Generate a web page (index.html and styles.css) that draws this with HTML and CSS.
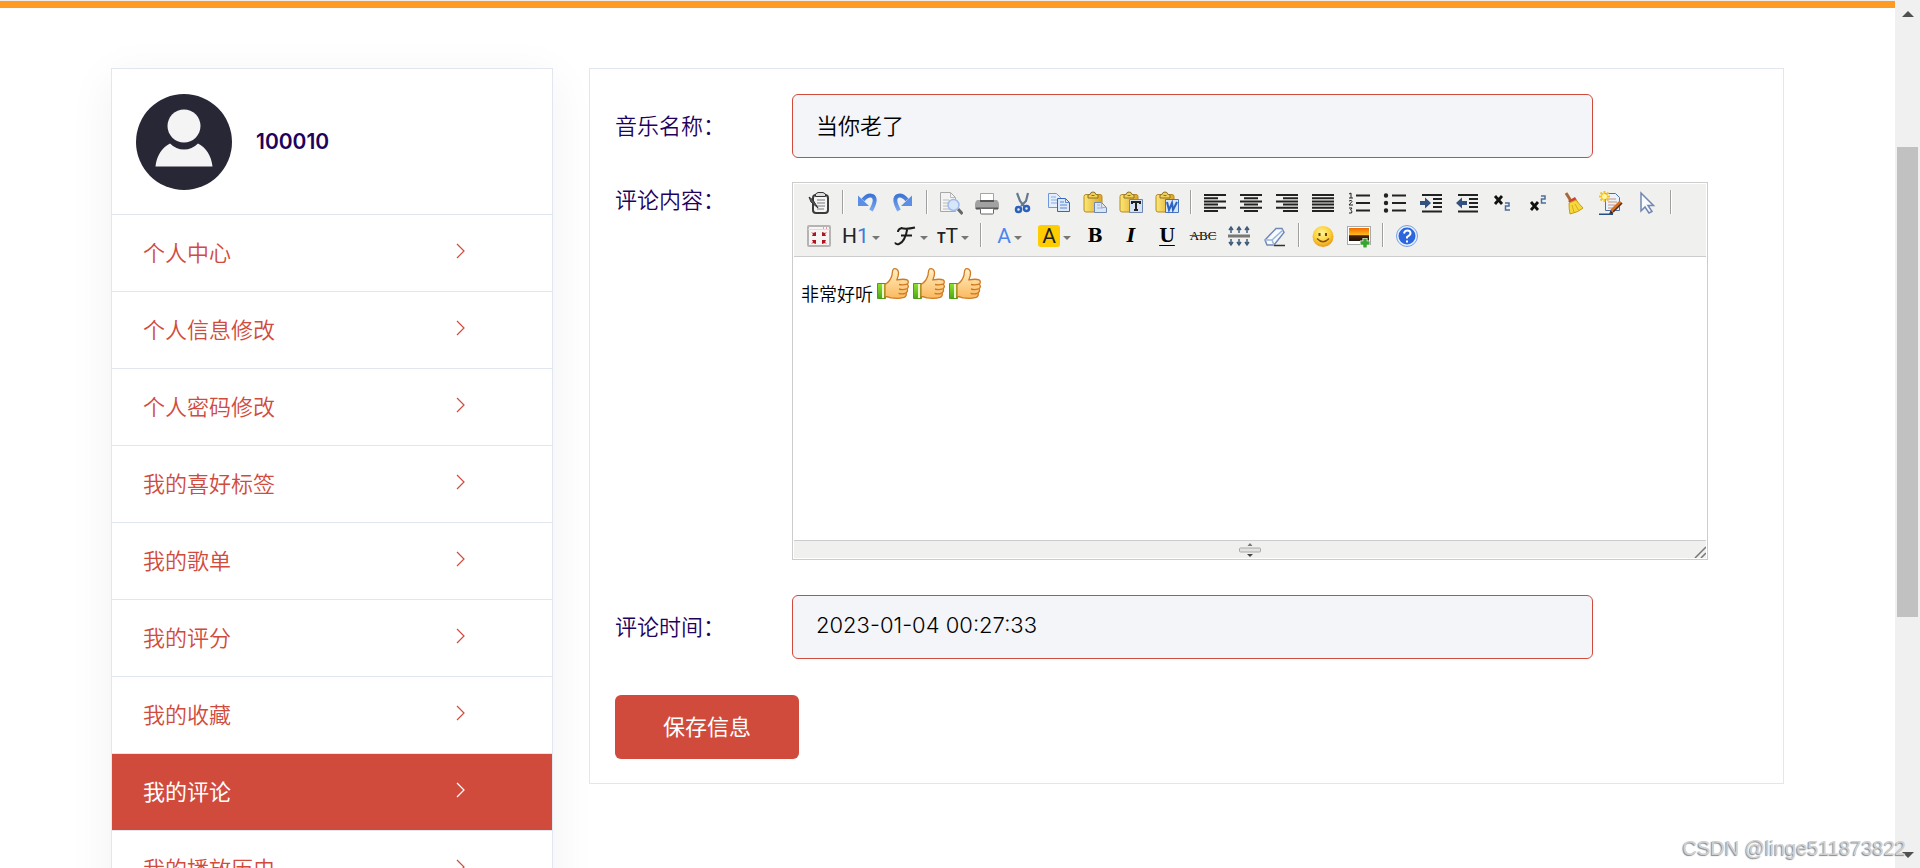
FILE: index.html
```html
<!DOCTYPE html>
<html lang="zh-CN">
<head>
<meta charset="utf-8">
<title>我的评论</title>
<link rel="stylesheet" href="styles.css">
</head>
<body>
<svg class="defs" aria-hidden="true">
  <defs>
    <linearGradient id="skin" x1="0" y1="0" x2="0" y2="1"><stop offset="0" stop-color="#fff0c4"/><stop offset="1" stop-color="#fbb95f"/></linearGradient>
    <linearGradient id="cuff" x1="0" y1="0" x2="0" y2="1"><stop offset="0" stop-color="#8fe02c"/><stop offset="1" stop-color="#4da818"/></linearGradient>
    <linearGradient id="blue" x1="0" y1="0" x2="0" y2="1"><stop offset="0" stop-color="#3d76d6"/><stop offset="1" stop-color="#7ba7ee"/></linearGradient>
    <linearGradient id="board" x1="0" y1="0" x2="1" y2="0"><stop offset="0" stop-color="#fbe777"/><stop offset="1" stop-color="#dba620"/></linearGradient>
    <radialGradient id="face" cx=".45" cy=".35" r=".65"><stop offset="0" stop-color="#fff59b"/><stop offset=".6" stop-color="#fcd038"/><stop offset="1" stop-color="#eb9a16"/></radialGradient>
    <linearGradient id="sunset" x1="0" y1="0" x2="0" y2="1"><stop offset="0" stop-color="#f06a00"/><stop offset=".5" stop-color="#ffb81c"/><stop offset=".6" stop-color="#4b2406"/><stop offset="1" stop-color="#1c1208"/></linearGradient>
  </defs>
  <symbol id="chevron" viewBox="0 0 10 16"><path d="M1 1l7 7-7 7" fill="none" stroke="currentColor" stroke-width="1.200"/></symbol>
  <symbol id="thumb" viewBox="-2 0 36 36">
    <path d="M2.500 18.500h8v15h-8z" fill="url(#cuff)" stroke="#4d9d1d"/>
    <path d="M8 19v14" stroke="#eaf9d0" stroke-width="2"/>
    <path d="M10 19.500c3.500-2 6-5.500 7-9.500.4-2 0-5 1.800-6.200 2-.9 4.500.8 4.700 3.700.2 3-1 5.600-1.600 7.300 3.100-.5 8-.9 10.200.1 1.600.9 1.500 3.200.2 4.300 1.500 1.300 1.300 3.600-.3 4.500 1 1.400.5 3.400-1 4.200.8 1.600 0 3.800-2 4.500-3 .9-9 1-12.500.5-2.200-.4-3.500-1.500-6.500-1.400z" fill="url(#skin)" stroke="#ce7a24" stroke-width="1.300"/>
    <path d="M24 19.500c2.500.6 5.500.5 8-.3M24 24c2.500.7 5.500.6 7.500-.2M23.500 28.300c2.200.6 5 .6 7 0" fill="none" stroke="#ce7a24" stroke-width="1.300"/>
  </symbol>
  <symbol id="clip" viewBox="0 0 24 24">
    <path d="M1 5.500q0-2 2-2h14q2 0 2 2V19q0 2-2 2H3q-2 0-2-2z" fill="url(#board)" stroke="#b98a22"/>
    <path d="M5 7V4q1-.5 2.200-.7Q7.500 1 10 1t2.800 2.300Q14 3.500 15 4v3z" fill="#efd15a" stroke="#8d6f2c"/>
    <path d="M8.500 4.500h3" stroke="#8d6f2c"/>
  </symbol>
</svg>

<div class="page">
  <div class="content">
    <div class="topbar"></div>
    <main class="layout">
      <nav class="sidebar">
        <div class="profile">
          <svg class="avatar" viewBox="0 0 96 96"><circle cx="48" cy="48" r="48" fill="#282736"/><circle cx="48" cy="32" r="16.500" fill="#f4f4f4"/><path d="M19.500 72.500C20.500 62 26 53.500 34 49.500q6 6 14 6t14-6c8 4 13.500 12.500 14.500 23z" fill="#f4f4f4"/></svg>
          <span class="username">100010</span>
        </div>
        <a class="item" href="#">个人中心<svg class="chevron"><use href="#chevron"/></svg></a>
        <a class="item" href="#">个人信息修改<svg class="chevron"><use href="#chevron"/></svg></a>
        <a class="item" href="#">个人密码修改<svg class="chevron"><use href="#chevron"/></svg></a>
        <a class="item" href="#">我的喜好标签<svg class="chevron"><use href="#chevron"/></svg></a>
        <a class="item" href="#">我的歌单<svg class="chevron"><use href="#chevron"/></svg></a>
        <a class="item" href="#">我的评分<svg class="chevron"><use href="#chevron"/></svg></a>
        <a class="item" href="#">我的收藏<svg class="chevron"><use href="#chevron"/></svg></a>
        <a class="item active" href="#">我的评论<svg class="chevron"><use href="#chevron"/></svg></a>
        <a class="item" href="#">我的播放历史<svg class="chevron"><use href="#chevron"/></svg></a>
      </nav>

      <form class="panel">
        <div class="row">
          <label class="label" for="name">音乐名称：</label>
          <input class="field" id="name" type="text" value="当你老了">
        </div>
        <div class="row row-editor">
          <label class="label" id="body-label">评论内容：</label>
          <div class="editor">
            <div class="toolbar">
              <button type="button" class="tool" aria-label="HTML代码"><svg viewBox="0 0 24 24"><rect x="6" y="4" width="15" height="18" rx="3" fill="#f4f4f4" stroke="#3b3b3b" stroke-width="2"/><path d="M8.500 5.500V3L11 1.500h5L18.500 3v2.500z" fill="#ddd" stroke="#333"/><path d="M10 9h8M10 12h8M10 15h8M10 18h7" stroke="#777b82"/><path d="M2 6l4 3 5 8-7-6z" fill="#555" stroke="#333"/></svg></button>
              <span class="sep"></span>
              <button type="button" class="tool" aria-label="后退"><svg viewBox="0 0 24 24"><path d="M8 9q5-6 9.500-4 5 3-1.500 14.500" fill="none" stroke="url(#blue)" stroke-width="4"/><path d="M3 4.500V15h11z" fill="#5b8fe6"/></svg></button>
              <button type="button" class="tool" aria-label="前进"><svg viewBox="0 0 24 24"><path d="M16 9q-5-6-9.500-4-5 3 1.500 14.500" fill="none" stroke="url(#blue)" stroke-width="4"/><path d="M21 4.500V15H10z" fill="#5b8fe6"/></svg></button>
              <span class="sep"></span>
              <button type="button" class="tool" aria-label="预览"><svg viewBox="0 0 24 24"><path d="M1.500 1.500h10l5 5v14h-15z" fill="#f3f3f3" stroke="#a8a8a8"/><path d="M11.500 1.500v5h5M4 9h6M4 12h5M4 15h5M4 18h7" fill="none" stroke="#bbb"/><path d="M19 18l4.500 5" stroke="#666" stroke-width="3"/><circle cx="14.500" cy="14" r="5.500" fill="#d5e5fa" stroke="#9fbbea" stroke-width="1.500"/></svg></button>
              <button type="button" class="tool" aria-label="打印"><svg viewBox="0 0 24 24"><path d="M5.500 11V2.500h13V11" fill="#fff" stroke="#a4a4a4"/><path d="M2 9h20q2 2 2 4v5H0v-5q0-2 2-4z" fill="#a2a2a2"/><path d="M1 17.500h22M5 10h14" stroke="#555" stroke-width="2"/><rect x="5.500" y="17.500" width="13" height="5.500" rx="1" fill="#fff" stroke="#666"/></svg></button>
              <button type="button" class="tool" aria-label="剪切"><svg viewBox="0 0 24 24"><path d="M6 2l3 8 4 5M17 2l-2 8-5 5" fill="none" stroke="#66798e" stroke-width="2.200"/><circle cx="7.500" cy="18.500" r="2.500" fill="none" stroke="#2c61bb" stroke-width="2.500"/><circle cx="15.500" cy="17.500" r="2.500" fill="none" stroke="#2c61bb" stroke-width="2.500"/></svg></button>
              <button type="button" class="tool" aria-label="复制"><svg viewBox="0 0 24 24"><path d="M1.500 2.500h8l4 4v10h-12z" fill="#e4eefc" stroke="#6f97db"/><path d="M4 6h5M4 9h6M4 12h6" stroke="#8cadde"/><path d="M10.500 7.500h8l4 4v9h-12z" fill="#dce9fb" stroke="#3467bf"/><path d="M18.500 7.500v4h4M13 11h4M13 14h7M13 17h7" fill="none" stroke="#5c88cf"/></svg></button>
              <button type="button" class="tool" aria-label="粘贴"><svg viewBox="0 0 24 24"><use href="#clip"/><path d="M11.500 11.500h7l5 5v5h-12z" fill="#dbe6f5" stroke="#6c87b1"/><path d="M18.500 11.500v5h5M14 14h3M14 17h6" fill="none" stroke="#9cb0ce"/></svg></button>
              <button type="button" class="tool" aria-label="粘贴为无格式文本"><svg viewBox="0 0 24 24"><use href="#clip"/><path d="M10.500 8.500h13v13h-13z" fill="#d7e2f2" stroke="#6c87b1"/><path d="M13 13v-2h8v2M17 11v8M15 19h4" fill="none" stroke="#222" stroke-width="2"/></svg></button>
              <button type="button" class="tool" aria-label="从Word粘贴"><svg viewBox="0 0 24 24"><use href="#clip"/><path d="M10.500 8.500h13v13h-13z" fill="#d9e6fb" stroke="#4874bd"/><path d="M12 11l2 8 3-7 1 7 4-8" fill="none" stroke="#2c63bd" stroke-width="2"/></svg></button>
              <span class="sep"></span>
              <button type="button" class="tool" aria-label="左对齐"><svg class="lines" viewBox="0 0 24 24"><path d="M1 4h22M1 7.200h14M1 10.400h22M1 13.600h14M1 16.800h22M1 20h14"/></svg></button>
              <button type="button" class="tool" aria-label="居中"><svg class="lines" viewBox="0 0 24 24"><path d="M1 4h22M5 7.200h14M1 10.400h22M5 13.600h14M1 16.800h22M5 20h14"/></svg></button>
              <button type="button" class="tool" aria-label="右对齐"><svg class="lines" viewBox="0 0 24 24"><path d="M1 4h22M8 7.200h15M1 10.400h22M8 13.600h15M1 16.800h22M8 20h15"/></svg></button>
              <button type="button" class="tool" aria-label="两端对齐"><svg class="lines" viewBox="0 0 24 24"><path d="M1 4h22M1 7.200h22M1 10.400h22M1 13.600h22M1 16.800h22M1 20h22"/></svg></button>
              <button type="button" class="tool" aria-label="编号"><svg class="lines" viewBox="0 0 24 24"><path d="M9 4.500h14M9 12h14M9 19.500h14"/><path class="thin" d="M2 3l2-1v5M2 7h4M2 10q3-1.500 3 .5L2 14h4M2 17h3l-1.500 2Q6 20 4.500 22L2 22"/></svg></button>
              <button type="button" class="tool" aria-label="项目符号"><svg class="lines" viewBox="0 0 24 24"><path d="M9 4.500h14M9 12h14M9 19.500h14"/><circle cx="3" cy="4.500" r="1.200"/><circle cx="3" cy="12" r="1.200"/><circle cx="3" cy="19.500" r="1.200"/></svg></button>
              <button type="button" class="tool" aria-label="增加缩进"><svg class="lines" viewBox="0 0 24 24"><path d="M3 4h20M14 8h9M14 12h9M14 16h9M3 20.500h20"/><polygon class="move" points="1,10 6,10 6,6.500 12,12 6,17.500 6,14 1,14"/></svg></button>
              <button type="button" class="tool" aria-label="减少缩进"><svg class="lines" viewBox="0 0 24 24"><path d="M3 4h20M14 8h9M14 12h9M14 16h9M3 20.500h20"/><polygon class="move" points="12,10 7,10 7,6.500 1,12 7,17.500 7,14 12,14"/></svg></button>
              <button type="button" class="tool" aria-label="下标"><svg viewBox="0 0 24 24"><path d="M4 5l7 8M11 5l-7 8" stroke="#111" stroke-width="2.800"/><path d="M14 12h4v3h-3.500v4H19" fill="none" stroke="#4c6ca0" stroke-width="1.500"/></svg></button>
              <button type="button" class="tool" aria-label="上标"><svg viewBox="0 0 24 24"><path d="M4 11l7 8M11 11l-7 8" stroke="#111" stroke-width="2.800"/><path d="M14 5h4v3h-3.500v4H19" fill="none" stroke="#4c6ca0" stroke-width="1.500"/></svg></button>
              <button type="button" class="tool" aria-label="清除格式"><svg viewBox="0 0 24 24"><path d="M3 2l5 8" stroke="#a66b35" stroke-width="3"/><path d="M5 10l7-4 3 5-6 3z" fill="#d23f37"/><path d="M6 12l7-3q4 5 7 8-4 4-13 6-1-5-1-11z" fill="#f7d83a" stroke="#c99a1b"/><path d="M9 14l2 7M12 13l4 7" stroke="#d9aa24"/></svg></button>
              <button type="button" class="tool" aria-label="一键排版"><svg viewBox="0 0 24 24"><path d="M6.500 2.500h10l4 4v13h-14z" fill="#eaf2fd" stroke="#50709f"/><path d="M9 8h8M9 11h9M9 14h7M9 17h6" stroke="#c99277"/><path d="M0 5.500h11M5.500 0v11M1.500 1.500l8 8M9.500 1.500l-8 8" stroke="#f8c21a" stroke-width="2"/><circle cx="5.500" cy="5.500" r="2.500" fill="#fff6a3"/><path d="M22 11l-9 9" stroke="#d27329" stroke-width="4"/><path d="M23 12l-9 9M12 20l-1 3 3-1" stroke="#572c1c" stroke-width="1.500"/><path d="M0 23.500h14" stroke="#234e86" stroke-width="2"/></svg></button>
              <button type="button" class="tool" aria-label="全选"><svg viewBox="0 0 24 24"><path d="M6 2v18l4-4 4 6 3-1.500-4-6h5.500z" fill="#f8fbff" stroke="#7187b0" stroke-width="1.500"/></svg></button>
              <span class="sep"></span>
              <button type="button" class="tool" aria-label="全屏显示"><svg viewBox="0 0 24 24"><rect x="1" y="2" width="22" height="20" rx="1" fill="#f7f4f4" stroke="#b7b3b3" stroke-width="2"/><path d="M1 5.500h22" stroke="#ddd"/><path d="M16 4h1M19 4h1" stroke="#d44"/><path d="M4 8l2 1 3-1v4H5l1-2zM20 8l-2 1-3-1v4h4l-1-2zM4 20l2-1 3 1v-4H5l1 2zM20 20l-2-1-3 1v-4h4l-1 2z" fill="#b31220"/></svg></button>
              <button type="button" class="tool drop" aria-label="段落">H<b class="one">1</b></button>
              <button type="button" class="tool drop" aria-label="字体"><svg class="script-f" viewBox="0 0 24 24"><path d="M9 4q5 1.500 14-.5M15.500 4Q13 18 7 20q-3 1-4-1.500M9 11.500h11M10 4Q6 5 6 8" fill="none" stroke="#1c1c1c" stroke-width="2"/></svg></button>
              <button type="button" class="tool drop" aria-label="文字大小"><b class="small-t">T</b>T</button>
              <span class="sep"></span>
              <button type="button" class="tool color-tool" aria-label="文字颜色"><span class="ink">A</span></button>
              <button type="button" class="tool color-tool" aria-label="文字背景"><span class="mark">A</span></button>
              <button type="button" class="tool serif" aria-label="粗体">B</button>
              <button type="button" class="tool serif italic" aria-label="斜体">I</button>
              <button type="button" class="tool serif underline" aria-label="下划线">U</button>
              <button type="button" class="tool strike" aria-label="删除线">ABC</button>
              <button type="button" class="tool" aria-label="行距"><svg viewBox="0 0 24 24"><path d="M1 12h22" stroke="#777" stroke-width="3"/><path d="M4 9V4m8 5V4m8 5V4M2 6l2-3 2 3m4 0l2-3 2 3m4 0l2-3 2 3M4 15v5m8-5v5m8-5v5M2 18l2 3 2-3m4 0l2 3 2-3m4 0l2 3 2-3" fill="none" stroke="#405b7b" stroke-width="1.500"/></svg></button>
              <button type="button" class="tool" aria-label="删除格式"><svg viewBox="0 0 24 24"><path d="M2 16L13 4.500h6l2 4L11 21H4z" fill="#f7faff" stroke="#7089b8" stroke-width="1.500"/><path d="M2 16h7l2 5M9 16L20 6" fill="none" stroke="#9cb3da" stroke-width="1.500"/><path d="M11 21.500h11" stroke="#333" stroke-width="1.500"/></svg></button>
              <span class="sep"></span>
              <button type="button" class="tool" aria-label="插入表情"><svg viewBox="0 0 24 24"><circle cx="12" cy="12.500" r="10.500" fill="url(#face)"/><path d="M8.500 9v3M15 9v3" stroke="#6d4204" stroke-width="2"/><path d="M6 14.500q6 6.500 12 0" fill="none" stroke="#87500a" stroke-width="1.500"/></svg></button>
              <button type="button" class="tool" aria-label="图片"><svg viewBox="0 0 24 24"><rect x=".5" y="2.500" width="23" height="18" fill="#fff" stroke="#aaa"/><rect x="2" y="4" width="20" height="13" fill="url(#sunset)"/><path d="M18 14v10M13 19h10" stroke="#fff" stroke-width="5"/><path d="M18 14.500v9M13.500 19h9" stroke="#37a52b" stroke-width="3.500"/></svg></button>
              <span class="sep"></span>
              <button type="button" class="tool" aria-label="关于"><svg viewBox="0 0 24 24"><circle cx="12" cy="12" r="10.500" fill="#e7f0ff" stroke="#79a0e5"/><circle cx="12" cy="12" r="8.500" fill="#2c66dc"/><path d="M9 9.500q.5-3 3.500-3t3 2.800q0 1.700-3.500 3.700v1.500M12 16.500v2" fill="none" stroke="#fff" stroke-width="2"/></svg></button>
            </div>
            <div class="writing" contenteditable="true" role="textbox" aria-labelledby="body-label">非常好听<svg class="thumb"><use href="#thumb"/></svg><svg class="thumb"><use href="#thumb"/></svg><svg class="thumb"><use href="#thumb"/></svg></div>
            <div class="status">
              <svg class="grip" viewBox="0 0 22 14"><path d="M8.500 3L11 0l2.500 3z" fill="#777"/><rect x=".5" y="5" width="21" height="4" rx="1" fill="#e2e2e2" stroke="#aaa"/><path d="M8 11h6l-3 3z" fill="#444"/></svg>
              <svg class="corner" viewBox="0 0 12 12"><path d="M1 12L12 1M7 12l5-5" stroke="#777" stroke-width="1.500"/></svg>
            </div>
          </div>
        </div>
        <div class="row row-time">
          <label class="label" for="time">评论时间：</label>
          <input class="field" id="time" type="text" value="2023-01-04 00:27:33">
        </div>
        <button class="save" type="button">保存信息</button>
      </form>
    </main>
  </div>
  <div class="scrollbar">
    <svg class="arrow" viewBox="0 0 12 6"><path d="M0 6l6-6 6 6z" fill="#505050"/></svg>
    <div class="track"><div class="thumb-bar"></div></div>
    <svg class="arrow" viewBox="0 0 12 6"><path d="M0 0h12L6 6z" fill="#505050"/></svg>
  </div>
  <div class="watermark">CSDN @linge511873822</div>
</div>
</body>
</html>
```
FILE: styles.css
```css
* { box-sizing: border-box; }

body {
  margin: 0;
  background: #fff;
  color: #1d025e;
  font-family: Inter, "Noto Sans CJK SC", sans-serif;
  font-size: 22px;
  font-weight: 350;
}

button, input { font: inherit; }

.defs { position: absolute; width: 0; height: 0; }

.page {
  position: relative;
  display: flex;
  height: 100vh;
  overflow: hidden;
}

.content { flex: 1; min-width: 0; }

.topbar {
  height: 8px;
  border-top: 1px solid #eee;
  background: #ff9a22;
}

.layout {
  display: grid;
  grid-template-columns: 442fr 1195fr;
  gap: 36px;
  align-items: start;
  margin: 60px 111px 0;
}

.sidebar {
  border: 1px solid #e2e6ee;
  background: #fff;
  box-shadow: 0 10px 45px rgba(0, 0, 0, 0.06);
}

.profile {
  display: flex;
  align-items: center;
  gap: 24px;
  padding: 25px 24px 24px;
}

.avatar { width: 96px; height: 96px; }

.username { padding-bottom: 2px; font-size: 21px; font-weight: 600; }

.item {
  display: flex;
  align-items: center;
  justify-content: space-between;
  height: 77px;
  padding: 0 86px 4px 31px;
  border-top: 1px solid #e2e6ee;
  color: #d14b3d;
  text-decoration: none;
}

.item.active {
  background: #d14b3d;
  color: #fff;
  font-weight: 400;
}

.chevron { width: 10px; height: 16px; }

.panel {
  padding: 25px 25px 24px;
  border: 1px solid #e2e6ee;
}

.row {
  display: grid;
  grid-template-columns: 177px 1fr;
  align-items: center;
}

.row-editor { align-items: start; margin-top: 24px; }

.row-time { margin-top: 35px; }

.label { line-height: 36px; }

.field {
  width: calc(100% - 165px);
  height: 64px;
  padding: 0 23px 4px;
  border: 1px solid #d14b3d;
  border-radius: 6px;
  background: #f3f5f9;
  color: #000;
}

.editor {
  width: calc(100% - 50px);
  padding: 1px;
  border: 1px solid #ccc;
  background: #fff;
}

.toolbar {
  display: flex;
  flex-wrap: wrap;
  padding: 2px 7px 4px;
  border-bottom: 1px solid #ccc;
  background: #f0f0ee;
}

.tool {
  display: flex;
  align-items: center;
  justify-content: center;
  width: 36px;
  height: 33px;
  padding: 0;
  border: 0;
  background: none;
  color: #222;
}

.tool svg { width: 24px; height: 24px; }

.sep {
  width: 2px;
  height: 24px;
  margin: 4px 5px;
  border-left: 1px solid #a0a0a0;
  border-right: 1px solid #fff;
}

.lines { fill: #222; stroke: #222; stroke-width: 2; }
.lines path { fill: none; }
.lines .thin { stroke-width: 1; }
.lines .move { fill: #33507f; stroke: none; }

.drop, .color-tool {
  width: 46px;
  padding-left: 2px;
  font: 21px Roboto, sans-serif;
}

.color-tool { width: 45px; padding-left: 0; }

.drop::after, .color-tool::after {
  content: "";
  margin: 4px 0 0 3px;
  border: 4px solid transparent;
  border-top-color: #777;
  border-bottom: 0;
}

.drop .script-f { margin-left: 4px; }
.drop .script-f { width: 26px; }

.one { color: #3c7be0; font-weight: 400; }
.small-t { font-size: 14px; font-weight: 700; padding-top: 4px; }
.ink { color: #4a86ee; }

.mark {
  width: 22px;
  border-radius: 3px;
  background: #fc0;
  line-height: 22px;
}

.serif { font: bold 18px "DejaVu Serif", serif; color: #000; }
.italic { font-style: italic; }
.underline { text-decoration: underline; text-underline-offset: 3px; }
.strike { font: 13px "Liberation Serif", serif; color: #000; text-decoration: line-through #405b7b; }

.writing {
  height: 283px;
  padding: 8px 7px;
  color: #000;
  font-size: 18px;
  line-height: 36px;
  outline: 0;
}

.thumb { width: 36px; height: 36px; vertical-align: baseline; }

.status {
  display: flex;
  align-items: center;
  justify-content: center;
  height: 18px;
  border-top: 1px solid #ccc;
  background: #f0f0ee;
  position: relative;
}

.grip { width: 22px; height: 14px; }
.corner { position: absolute; right: 0; bottom: 0; width: 12px; height: 12px; }

.save {
  display: block;
  width: 184px;
  height: 64px;
  margin-top: 36px;
  padding-bottom: 5px;
  border: 0;
  border-radius: 6px;
  background: #d14b3d;
  color: #fff;
  font-weight: 400;
}

.scrollbar {
  display: flex;
  flex-direction: column;
  align-items: center;
  width: 25px;
  padding: 11px 2px 10px;
  background: #f0f0f0;
}

.arrow { width: 12px; height: 6px; }

.track {
  display: flex;
  flex: 1;
  flex-direction: column;
  width: 100%;
  padding: 130px 0 235px;
}

.thumb-bar { flex: 1; background: #c1c1c1; }

.watermark {
  position: absolute;
  right: 14px;
  bottom: 8px;
  color: #d0d0d0;
  font: 20px "Liberation Sans", sans-serif;
  text-shadow: -1px 1px 1px #888;
}
```
